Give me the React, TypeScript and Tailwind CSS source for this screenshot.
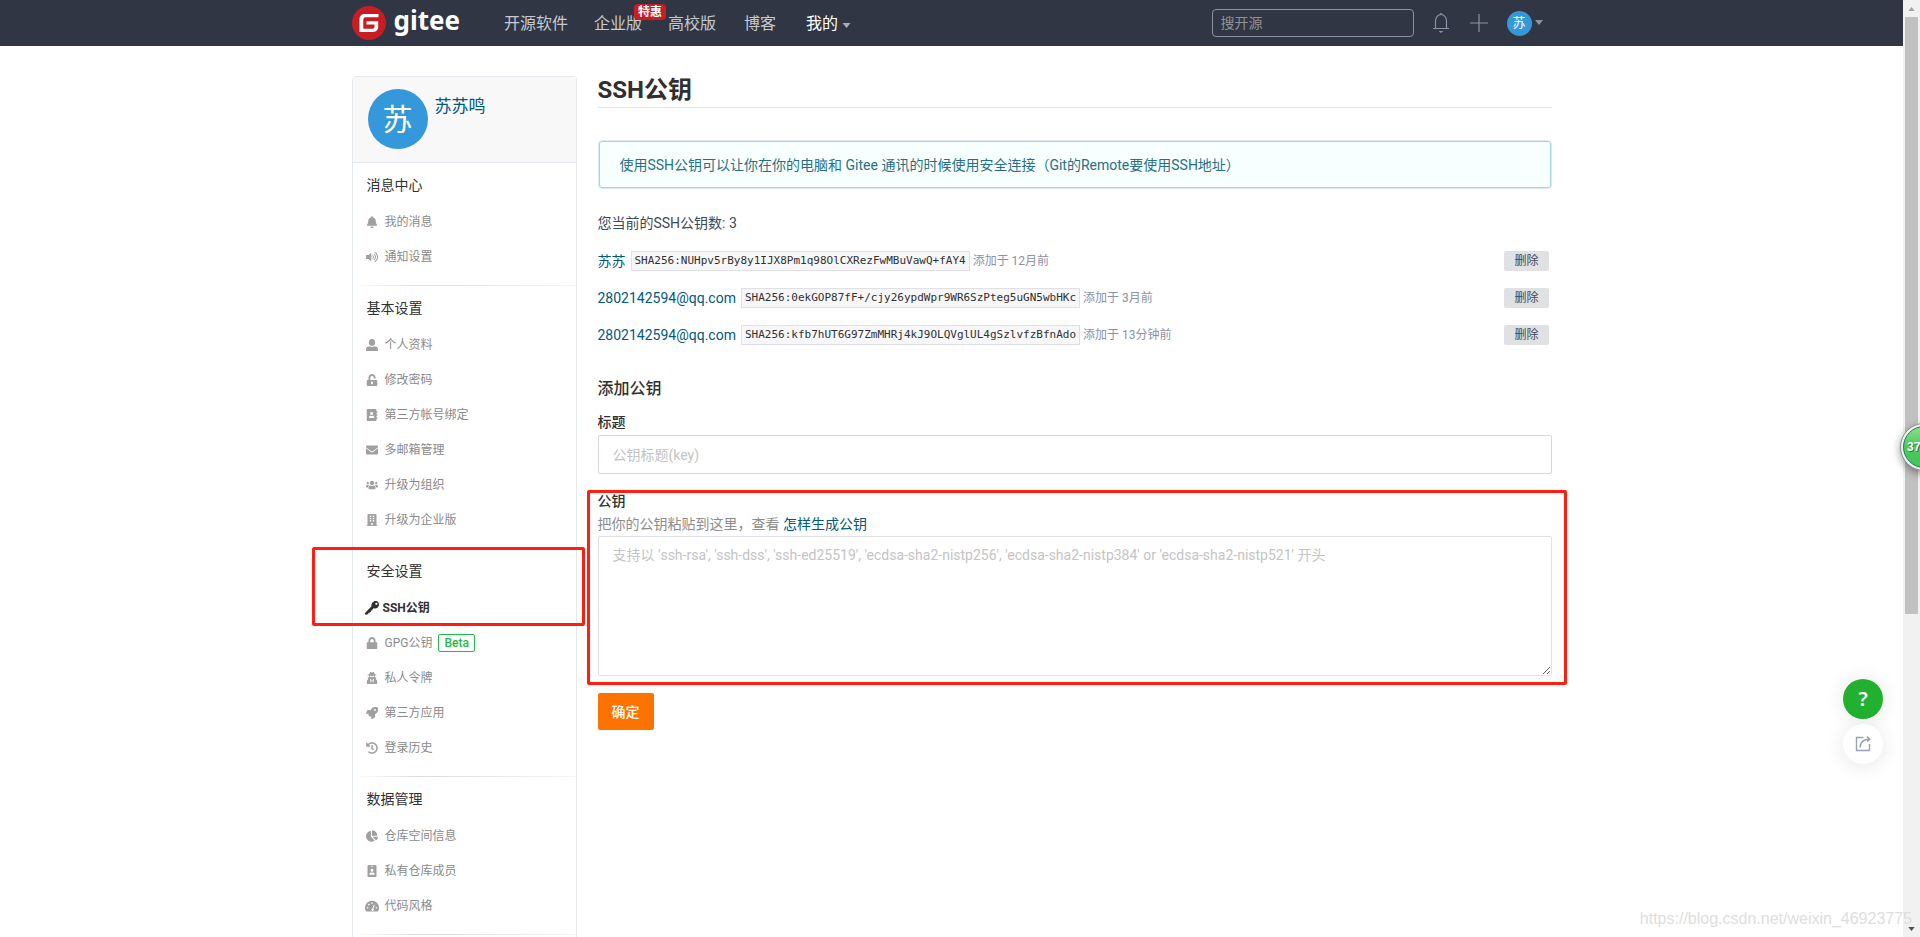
import React from "react";
import {
  FaBell, FaVolumeUp, FaUnlockAlt, FaEnvelope, FaUsers, FaBuilding, FaLock,
  FaUserSecret, FaRocket, FaHistory, FaChartPie, FaAddressBook, FaIdBadge,
} from "react-icons/fa";

type IconProps = { className?: string };
type Icon = (props: IconProps) => React.ReactNode;
type Item = { icon: Icon; label: string; active?: boolean; beta?: boolean };
type Section = { title: string; items: Item[] };

function PersonIcon({ className }: IconProps) {
  return (
    <svg viewBox="0 0 12 12" className={className} fill="currentColor" aria-hidden="true">
      <ellipse cx="6" cy="3.400" rx="3.100" ry="3.400" />
      <path d="M3.400 7.200c1.500 1 3.700 1 5.200 0C10.800 7.600 12 8.600 12 10.200v1a.8.8 0 0 1-.8.8H.8a.8.8 0 0 1-.8-.8v-1C0 8.600 1.200 7.600 3.400 7.200z" />
    </svg>
  );
}

function KeyIcon({ className }: IconProps) {
  return (
    <svg viewBox="0 0 14 14" className={className} fill="currentColor" aria-hidden="true">
      <path
        fillRule="evenodd"
        d="M8.800.5C10.300-.3 12.400 0 13.400 1.500c1 1.600.6 4-1 5.200-1.200.9-2.700 1-3.900.5L7.300 8.400l.1 1-1.200.2-.2 1.200-1.200.1-.3 1.200-1.200.2L2.400 13.500.3 13.700 0 12l6.500-6.700c-.5-1.900.5-3.900 2.300-4.800zM11.300 1.700a1.100 1.100 0 1 0 .1 2.200 1.100 1.100 0 0 0-.1-2.200z"
      />
    </svg>
  );
}

function GaugeIcon({ className }: IconProps) {
  return (
    <svg viewBox="0 0 14 12" className={className} aria-hidden="true">
      <path d="M7 .8a7 7 0 0 0-5.900 10.700h11.800A7 7 0 0 0 7 .8z" fill="currentColor" />
      <g fill="#fff">
        <circle cx="2.600" cy="7.800" r=".8" />
        <circle cx="3.900" cy="4.600" r=".8" />
        <circle cx="7" cy="3.200" r=".8" />
        <circle cx="11.400" cy="7.800" r=".8" />
        <path d="M8.900 4.600l.8.300-1.300 3.900a1.200 1.200 0 1 1-.9-.3z" />
      </g>
    </svg>
  );
}

const SECTIONS: Section[] = [
  { title: "消息中心", items: [
    { icon: FaBell, label: "我的消息" },
    { icon: FaVolumeUp, label: "通知设置" },
  ] },
  { title: "基本设置", items: [
    { icon: PersonIcon, label: "个人资料" },
    { icon: FaUnlockAlt, label: "修改密码" },
    { icon: FaAddressBook, label: "第三方帐号绑定" },
    { icon: FaEnvelope, label: "多邮箱管理" },
    { icon: FaUsers, label: "升级为组织" },
    { icon: FaBuilding, label: "升级为企业版" },
  ] },
  { title: "安全设置", items: [
    { icon: KeyIcon, label: "SSH公钥", active: true },
    { icon: FaLock, label: "GPG公钥", beta: true },
    { icon: FaUserSecret, label: "私人令牌" },
    { icon: FaRocket, label: "第三方应用" },
    { icon: FaHistory, label: "登录历史" },
  ] },
  { title: "数据管理", items: [
    { icon: FaChartPie, label: "仓库空间信息" },
    { icon: FaIdBadge, label: "私有仓库成员" },
    { icon: GaugeIcon, label: "代码风格" },
  ] },
];

const KEYS = [
  { name: "苏苏", print: "SHA256:NUHpv5rBy8y1IJX8Pm1q98OlCXRezFwMBuVawQ+fAY4", added: "添加于 12月前" },
  { name: "2802142594@qq.com", print: "SHA256:0ekGOP87fF+/cjy26ypdWpr9WR6SzPteg5uGN5wbHKc", added: "添加于 3月前" },
  { name: "2802142594@qq.com", print: "SHA256:kfb7hUT6G97ZmMHRj4kJ9OLQVglUL4gSzlvfzBfnAdo", added: "添加于 13分钟前" },
];

function Caret({ className }: IconProps) {
  return (
    <svg viewBox="0 0 8 5" className={className} aria-hidden="true">
      <path d="M0 0h8L4 5z" fill="currentColor" />
    </svg>
  );
}

function Header() {
  return (
    <header className="h-[46px] bg-[#303643]">
      <div className="mx-auto flex h-full w-full max-w-[1200px] items-center">
        <a href="#" aria-label="gitee" className="flex items-center gap-2 text-white">
          <svg viewBox="0 0 34 34" className="size-[34px]" aria-hidden="true">
            <circle cx="17" cy="17" r="17" fill="#c71d23" />
            <path
              d="M26.500 8H12.300A4.800 4.800 0 0 0 7.500 12.800v13.200h14a4.700 4.700 0 0 0 4.700-4.700v-6H14.500v3.300h8v2.200a1.900 1.900 0 0 1-1.900 1.900h-9.300v-9a2.400 2.400 0 0 1 2.400-2.400h12.800z"
              fill="#fff"
            />
          </svg>
          <span className="pb-1.5 font-['Noto_Sans',sans-serif] text-[26px] leading-8 font-bold">gitee</span>
        </a>
        <nav className="ml-11 flex items-center pt-0.5 text-base text-[#c8cad0]">
          <a href="#">开源软件</a>
          <a href="#" className="relative ml-[26px]">
            企业版
            <span className="absolute -top-2 left-10 rounded-sm bg-[#c71d23] px-1 text-xs leading-4 font-bold whitespace-nowrap text-white">特惠</span>
          </a>
          <a href="#" className="ml-[26px]">高校版</a>
          <a href="#" className="ml-7">博客</a>
          <button type="button" className="ml-[30px] flex items-center gap-1 text-white">
            我的
            <Caret className="mt-0.5 h-[5px] w-[9px] text-[#a9acb5]" />
          </button>
        </nav>
        <input
          type="search"
          aria-label="搜开源"
          placeholder="搜开源"
          className="ml-auto h-7 w-[202px] rounded-sm border border-[#8c92a4] bg-transparent px-2 text-sm text-white placeholder:text-[#8f9298]"
        />
        <button type="button" aria-label="通知" className="ml-[18px] text-[#8c92a4]">
          <svg viewBox="0 0 18 22" className="h-[22px] w-[18px]" fill="none" stroke="currentColor" aria-hidden="true">
            <path d="M1 16.500h16M3.500 16.500V9a5.500 6.500 0 0 1 11 0v7.500" strokeWidth="1.200" />
            <path d="M7.500 2.500a1.500 1.500 0 0 1 3 0zM6.500 19h5l-2.500 2z" fill="currentColor" stroke="none" />
          </svg>
        </button>
        <button type="button" aria-label="新建" className="ml-5 text-[#8c92a4]">
          <svg viewBox="0 0 18 18" className="size-[18px]" stroke="currentColor" strokeWidth="1.200" aria-hidden="true">
            <path d="M9 0v18M0 9h18" />
          </svg>
        </button>
        <button type="button" aria-label="账户" className="mr-[9px] ml-[19px] flex items-center gap-[3px]">
          <span className="flex size-[25px] items-center justify-center rounded-full bg-[#3498db] text-[13px] text-white">苏</span>
          <Caret className="mb-0.5 h-[5px] w-2 text-[#8c92a4]" />
        </button>
      </div>
    </header>
  );
}

function Sidebar() {
  return (
    <aside className="w-[225px] shrink-0 rounded-t-sm border border-[#e3e9ed] pb-8">
      <div className="flex h-[86px] gap-[7px] border-b border-[#e3e9ed] bg-[#f8f8f8] px-[15px] pt-3">
        <span className="flex size-[60px] items-center justify-center rounded-full bg-[#3498db] text-[30px] text-white">苏</span>
        <a href="#" className="pt-[5px] text-[17px] leading-6 text-[#005980]">苏苏鸣</a>
      </div>
      {SECTIONS.map((section) => (
        <section key={section.title} className="relative">
          <h2 className="px-3.5 pt-[11px] pb-2 text-sm leading-[22px] text-[#303030]">{section.title}</h2>
          <ul className="pb-[11px]">
            {section.items.map(({ icon: Icon, label, active, beta }) => (
              <li key={label}>
                <a
                  href="#"
                  className={
                    active
                      ? "flex h-[35px] items-center gap-[3px] px-3 text-xs font-bold text-[#303030]"
                      : "flex h-[35px] items-center gap-[5px] px-3 text-xs text-[#8a8a8a]"
                  }
                >
                  <span className={active ? "flex w-[15px] justify-center" : "flex w-[15px] justify-center text-[#a0a0a0]"}>
                    <Icon className={active ? "size-3.5" : "h-3 w-auto"} />
                  </span>
                  {label}
                  {beta && (
                    <span className="ml-px rounded-xs border border-[#21ba45] px-[5px] text-xs leading-4 font-medium text-[#21ba45]">Beta</span>
                  )}
                </a>
              </li>
            ))}
          </ul>
          <div className="h-px bg-linear-to-r from-white via-[#dcdcdc] via-30% to-[#f6f6f6]" />
          {section.title === "安全设置" && (
            <div className="pointer-events-none absolute -top-0.5 -left-[41px] h-[79px] w-[273px] rounded-xs border-3 border-[#ff1e10]" />
          )}
        </section>
      ))}
    </aside>
  );
}

function Main() {
  return (
    <main className="flex min-w-0 flex-1 flex-col text-sm text-[#40485b]">
      <h1 className="border-b border-[#e3e3e3] pb-[3px] text-2xl leading-7 font-bold text-[#303030]">SSH公钥</h1>
      <p className="mt-8 rounded-sm border border-[#dfe9ee] bg-[#f8ffff] px-[21px] pt-3.5 pb-3 leading-[21px] text-[#276f86] inset-ring inset-ring-[#a9d5de]">
        使用SSH公钥可以让你在你的电脑和 Gitee 通讯的时候使用安全连接（Git的Remote要使用SSH地址）
      </p>
      <p className="mt-6 leading-[21px]">您当前的SSH公钥数: 3</p>
      <ul className="mt-[17px] flex flex-col gap-[17px]">
        {KEYS.map((key) => (
          <li key={key.print} className="flex h-5 items-center pr-[3px]">
            <a href="#" className="text-[#005980]">{key.name}</a>
            <code className="ml-[5px] border border-[#dfdfe6] bg-[#f7f7fa] px-[3px] font-['DejaVu_Sans_Mono',monospace] text-[11px] leading-[18px] text-[#303030]">{key.print}</code>
            <span className="ml-[3px] text-xs text-[#8c92a4]">{key.added}</span>
            <button type="button" className="ml-auto h-5 rounded-xs bg-[#e0e1e2] px-2.5 text-xs leading-5">删除</button>
          </li>
        ))}
      </ul>
      <form className="flex flex-col">
        <h2 className="mt-8 text-base leading-6 font-medium text-[#303030]">添加公钥</h2>
        <label htmlFor="key-title" className="mt-[11px] leading-5 font-medium text-[#303030]">标题</label>
        <input
          id="key-title"
          type="text"
          placeholder="公钥标题(key)"
          className="mt-[3px] h-[39px] rounded-xs border border-[#d6d7e0] px-3.5 placeholder:text-[#c4c4c4]"
        />
        <div className="relative mt-4 flex flex-col">
          <label htmlFor="key-body" className="leading-[22px] font-medium text-[#303030]">公钥</label>
          <p className="leading-6 text-[#8c8c8c]">
            把你的公钥粘贴到这里，查看 <a href="#" className="text-[#005980]">怎样生成公钥</a>
          </p>
          <textarea
            id="key-body"
            placeholder="支持以 'ssh-rsa', 'ssh-dss', 'ssh-ed25519', 'ecdsa-sha2-nistp256', 'ecdsa-sha2-nistp384' or 'ecdsa-sha2-nistp521' 开头"
            className="h-[140px] w-full resize rounded-xs border border-[#e0e1e8] px-3.5 py-[7px] leading-[22px] placeholder:text-[#c4c4c4]"
          />
          <div className="pointer-events-none absolute top-0 -right-[15px] -bottom-[9px] -left-[11px] rounded-xs border-3 border-[#ff1e10]" />
        </div>
        <button type="submit" className="mt-[17px] h-[37px] self-start rounded-xs bg-[#fe7300] px-3.5 font-medium text-white">确定</button>
      </form>
    </main>
  );
}

function FloatingTools() {
  return (
    <div className="absolute top-[679px] right-5 flex flex-col gap-[5px]">
      <button type="button" aria-label="帮助" className="flex size-10 items-center justify-center rounded-full bg-[#21b02f] font-['Noto_Sans',sans-serif] text-xl font-semibold text-white shadow-[0_0_20px_rgba(0,0,0,0.1)]">?</button>
      <button type="button" aria-label="分享" className="flex size-10 items-center justify-center rounded-full bg-white text-[#9aa0b2] shadow-[0_2px_20px_rgba(0,0,0,0.1)]">
        <svg viewBox="0 0 16 16" className="size-4" fill="none" stroke="currentColor" strokeWidth="1.400" aria-hidden="true">
          <path d="M8.500 1.500h-7v13h13V8M5 11.500C5.300 7 8 3.300 14.500 3M11.800.6 14.800 3l-2.500 2.600" />
        </svg>
      </button>
    </div>
  );
}

function ScrollRail() {
  return (
    <div className="relative flex w-[17px] shrink-0 flex-col items-center bg-[#f1f1f1]" aria-hidden="true">
      <div className="flex h-[17px] items-center">
        <Caret className="h-1 w-[7px] rotate-180 text-[#a3a3a3]" />
      </div>
      <div className="h-[597px] w-[13px] bg-[#c1c1c1]" />
      <div className="mt-auto flex h-[17px] items-center">
        <Caret className="h-1 w-[7px] text-[#505050]" />
      </div>
      <div className="absolute top-[423px] -left-[3px] flex size-12 items-center rounded-full border border-[#8f8f8f] bg-[#f0f0f0] p-0.5 shadow-[0_3px_8px_rgba(0,0,0,0.4)]">
        <div className="flex size-full items-center rounded-full border border-[#16805a] bg-linear-to-b from-[#8fe08a] via-[#4cc95f] via-45% to-[#45c45a] pl-[3px] font-['Liberation_Sans',sans-serif] text-xs font-bold text-white text-shadow-[1px_1px_0_#2a7a3a]">37</div>
      </div>
    </div>
  );
}

export default function App() {
  return (
    <div className="relative flex h-screen overflow-hidden bg-white font-['Roboto','Noto_Sans_CJK_SC',sans-serif]">
      <div className="relative min-w-0 flex-1 overflow-hidden">
        <Header />
        <div className="mx-auto flex w-full max-w-[1200px] items-start gap-[21px] pt-[30px]">
          <Sidebar />
          <Main />
        </div>
        <FloatingTools />
      </div>
      <ScrollRail />
      <div className="pointer-events-none absolute right-2 bottom-1.5 font-['Liberation_Sans',sans-serif] text-base leading-6 text-[#dedede]">
        https://blog.csdn.net/weixin_46923775
      </div>
    </div>
  );
}
